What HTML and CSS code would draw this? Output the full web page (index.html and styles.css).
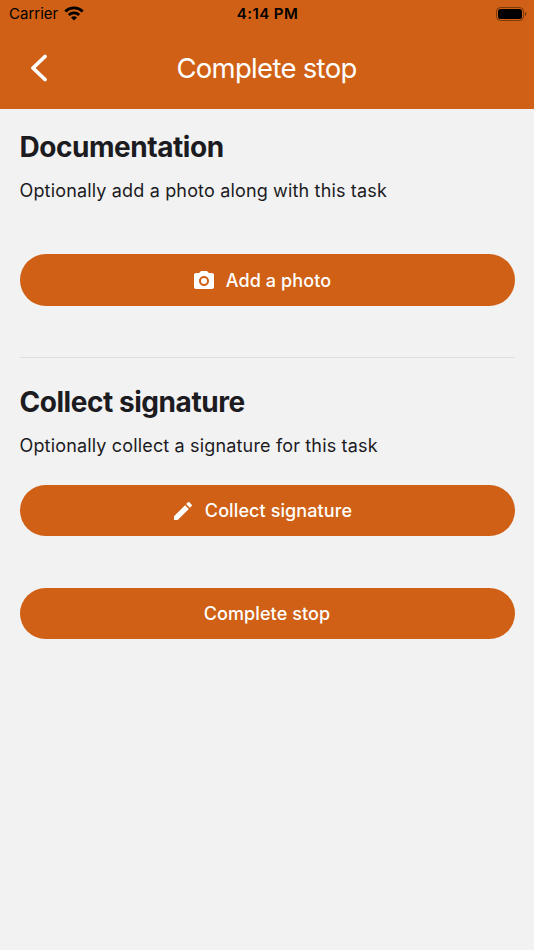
FILE: index.html
```html
<!DOCTYPE html>
<html lang="en">

<head>
    <meta charset="UTF-8">
    <meta name="viewport" content="width=device-width, initial-scale=1.0">
    <title>Complete stop</title>
    <link rel="stylesheet" href="styles.css">
</head>

<body>
    <header class="header">
        <div class="status-bar">
            <div class="carrier">
                <span class="carrier-name">Carrier</span>
                <svg class="wifi" width="20" height="15" viewBox="0 0 20 15">
                    <path d="M10 14.5 L7 11.6 A4.3 4.3 0 0 1 13 11.6 Z" />
                    <path d="M4.8 8.9 A7.6 7.6 0 0 1 15.2 8.9" class="wave" />
                    <path d="M1.3 5.4 A12.6 12.6 0 0 1 18.7 5.4" class="wave" />
                </svg>
            </div>
            <span class="time">4:14 PM</span>
            <svg class="battery" width="31" height="14" viewBox="0 0 31 14">
                <rect x="0.5" y="0.5" width="27" height="13" rx="4" class="battery-case" />
                <rect x="2" y="2" width="24" height="10" rx="2.5" />
                <path d="M29 4.7 A2.6 2.6 0 0 1 29 9.3 Z" class="battery-tip" />
            </svg>
        </div>
        <div class="nav">
            <button class="back" aria-label="Back">
                <svg width="18" height="28" viewBox="0 0 18 28">
                    <path d="M15 2.5 L3 14 L15 25.5" />
                </svg>
            </button>
            <h1 class="title">Complete stop</h1>
        </div>
    </header>

    <main class="content">
        <section class="documentation">
            <h2>Documentation</h2>
            <p>Optionally add a photo along with this task</p>
            <button class="btn btn-icon">
                <svg width="24" height="24" viewBox="0 0 24 24">
                    <path fill-rule="evenodd" d="M9 2L7.17 4H4c-1.1 0-2 .9-2 2v12c0 1.1.9 2 2 2h16c1.1 0 2-.9 2-2V6c0-1.1-.9-2-2-2h-3.17L15 2H9zm3 15c-2.76 0-5-2.24-5-5s2.24-5 5-5 5 2.24 5 5-2.24 5-5 5z" />
                    <circle cx="12" cy="12" r="3" />
                </svg>
                <span>Add a photo</span>
            </button>
        </section>

        <section class="signature">
            <h2>Collect signature</h2>
            <p>Optionally collect a signature for this task</p>
            <button class="btn btn-icon">
                <svg width="24" height="24" viewBox="0 0 24 24">
                    <path d="M3 17.25V21h3.75L17.81 9.94l-3.75-3.75L3 17.25zM20.71 7.04a1 1 0 0 0 0-1.41l-2.34-2.34a1 1 0 0 0-1.41 0l-1.83 1.83 3.75 3.75 1.83-1.83z" />
                </svg>
                <span>Collect signature</span>
            </button>
        </section>

        <button class="btn">
            <span>Complete stop</span>
        </button>
    </main>
</body>

</html>
```

FILE: styles.css
```css
body {
    margin: 0;
    min-height: 950px;
    background-color: #f2f2f2;
    color: #1c1b1f;
    font-family: Inter, sans-serif;
}

button {
    border: none;
    padding: 0;
    font-family: inherit;
}

.header {
    height: 108.5px;
    background-color: #cf6015;
}

.status-bar {
    display: grid;
    grid-template-columns: 1fr auto 1fr;
    align-items: center;
    height: 27px;
    padding: 0 8px 0 9px;
    color: #000;
}

.carrier {
    display: flex;
    align-items: center;
    gap: 6px;
}

.carrier-name {
    font-size: 15px;
}

.wifi {
    margin-bottom: 1px;
}

.wave {
    fill: none;
    stroke: #000;
    stroke-width: 2.8;
}

.time {
    font-size: 15px;
    font-weight: 600;
    letter-spacing: 0.45px;
}

.battery {
    justify-self: end;
    margin-right: -1px;
}

.battery-case {
    fill: none;
    stroke: #000;
    stroke-opacity: 0.4;
}

.battery-tip {
    fill-opacity: 0.45;
}

.nav {
    display: grid;
    grid-template-columns: 60px 1fr 60px;
    align-items: center;
    height: 82px;
}

.back {
    display: flex;
    justify-content: flex-end;
    padding-right: 12px;
    background: none;
}

.back path {
    fill: none;
    stroke: #fff;
    stroke-width: 3.8;
    stroke-linecap: round;
    stroke-linejoin: round;
}

.title {
    margin: 0;
    padding-right: 1px;
    color: #fff;
    font-size: 27.5px;
    font-weight: 400;
    letter-spacing: -0.7px;
    text-align: center;
}

.content {
    padding: 20px 19.5px 0;
}

h2 {
    margin: 0;
    font-size: 28px;
    line-height: 36px;
    font-weight: 700;
    letter-spacing: -0.45px;
}

p {
    margin: 13px 0 0;
    font-size: 18px;
    line-height: 26px;
    letter-spacing: 0.16px;
}

.btn {
    display: flex;
    justify-content: center;
    align-items: center;
    gap: 10px;
    box-sizing: border-box;
    width: 100%;
    height: 51.5px;
    padding-top: 1px;
    border-radius: 26px;
    background-color: #cf6015;
    color: #fff;
    font-size: 18px;
    font-weight: 500;
    letter-spacing: 0.1px;
}

.btn-icon {
    padding-right: 11px;
}

.btn svg {
    fill: #fff;
}

.documentation {
    padding-bottom: 51.5px;
    border-bottom: 1px solid #dedede;
}

.documentation .btn {
    margin-top: 50.5px;
    padding-top: 2px;
}

.signature {
    padding: 26px 0 51.5px;
}

.signature .btn {
    margin-top: 25.5px;
}
```
